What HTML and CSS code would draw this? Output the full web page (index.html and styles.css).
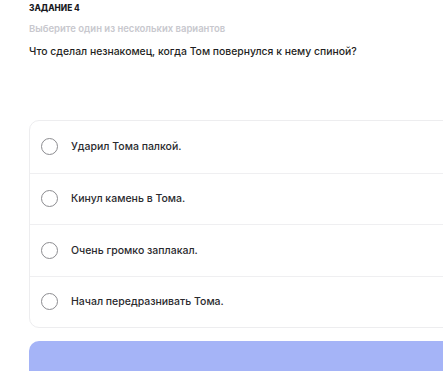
FILE: index.html
```html
<!DOCTYPE html>
<html lang="ru">
<head>
<meta charset="utf-8">
<link rel="stylesheet" href="styles.css">
</head>
<body>
<div class="page">
  <div class="task-label">ЗАДАНИЕ 4</div>
  <div class="task-hint">Выберите один из нескольких вариантов</div>
  <div class="task-question">Что сделал незнакомец, когда Том повернулся к нему спиной?</div>
  <div class="options">
    <label class="option"><span class="radio"></span><span class="option-text">Ударил Тома палкой.</span></label>
    <label class="option"><span class="radio"></span><span class="option-text">Кинул камень в Тома.</span></label>
    <label class="option"><span class="radio"></span><span class="option-text">Очень громко заплакал.</span></label>
    <label class="option"><span class="radio"></span><span class="option-text">Начал передразнивать Тома.</span></label>
  </div>
  <div class="submit"></div>
</div>
</body>
</html>
```
FILE: styles.css
```css
* { box-sizing: border-box; }
html, body { margin: 0; padding: 0; background: #fff; overflow: hidden; }
body { font-family: Inter, "Noto Sans", sans-serif; color: #1f1f23; }
.page { padding: 2px 0 0 29px; width: 470px; }
.task-label { font-size: 8.3px; font-weight: 800; line-height: 12px; color: #1a1a1f; }
.task-hint { margin-top: 8px; font-size: 9.5px; line-height: 14px; color: #c8c8ce; font-weight: 600; }
.task-question { margin-top: 9px; font-size: 10.4px; line-height: 14px; color: #1f1f23; font-weight: 500; }
.options { margin-top: 61px; border: 1px solid #ededef; border-radius: 10px; display: flex; flex-direction: column; }
.option { display: flex; align-items: center; gap: 13px; height: 51.5px; padding-left: 11px; border-top: 1px solid #efeff1; }
.option:first-child { border-top: none; }
.radio { width: 17px; height: 17px; border: 1.6px solid #8c8c90; border-radius: 50%; flex: none; }
.option-text { font-size: 10.5px; font-weight: 500; color: #2a2a2e; }
.submit { margin-top: 13px; height: 40px; border-radius: 10px; background: #a5b4f7; }
```
